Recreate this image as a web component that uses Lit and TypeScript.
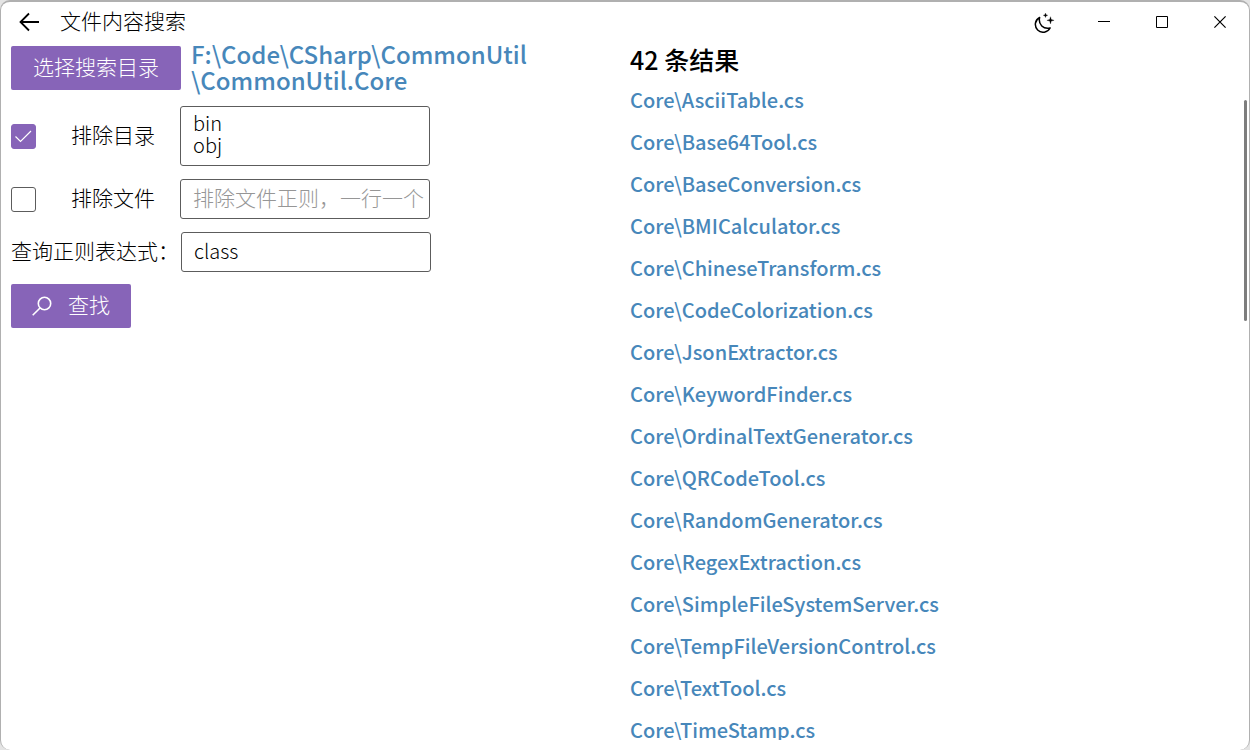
import { LitElement, html, css } from "lit";
import { customElement, state } from "lit/decorators.js";

const FILES = [
  "AsciiTable", "Base64Tool", "BaseConversion", "BMICalculator", "ChineseTransform",
  "CodeColorization", "JsonExtractor", "KeywordFinder", "OrdinalTextGenerator",
  "QRCodeTool", "RandomGenerator", "RegexExtraction", "SimpleFileSystemServer",
  "TempFileVersionControl", "TextTool", "TimeStamp",
];

@customElement("app-root")
export class AppRoot extends LitElement {
  @state() private excludeDirs = true;
  @state() private excludeFiles = false;

  static styles = css`
    :host {
      display: block;
      height: 100vh;
      background: #e4e4e4;
      color: #000;
      font: 300 21px/24px "Noto Sans CJK SC", sans-serif;
    }
    * { box-sizing: border-box; }
    button, input, textarea { font: inherit; color: inherit; margin: 0; }
    button { border: 0; padding: 0; background: none; cursor: pointer; }
    svg { display: block; fill: none; stroke: currentColor; }
    .window {
      height: 100%;
      display: flex;
      flex-direction: column;
      border: 1px solid #b0b0b0;
      border-top-width: 2px;
      border-bottom: 0;
      border-radius: 10px;
      background: #fff;
      overflow: hidden;
    }
    .titlebar { flex: none; height: 40px; display: flex; align-items: center; }
    .back { width: 56px; height: 40px; display: grid; place-items: center; }
    h1 { flex: 1; margin: 0 0 0 3px; padding-bottom: 4px; font: inherit; }
    .caption { width: 58px; height: 40px; display: grid; place-items: center; }
    .theme { margin-right: 2px; }
    .content {
      flex: 1;
      min-height: 0;
      display: grid;
      grid-template-columns: 1fr 1fr;
      padding: 0 0 10px 10px;
    }
    .form { display: flex; flex-direction: column; align-items: flex-start; }
    .primary {
      height: 44px;
      display: flex;
      align-items: center;
      justify-content: center;
      gap: 16px;
      border-radius: 2px;
      background: #8764b8;
      color: #fff;
      flex: none;
    }
    .choose { width: 170px; }
    .find { width: 120px; margin-top: 12px; }
    .row { display: flex; align-items: center; }
    .text { padding-bottom: 4px; }
    .path {
      margin-left: 10px;
      padding-bottom: 2px;
      font-size: 24px;
      line-height: 26px;
      font-weight: 500;
      color: #4787ba;
    }
    .target { height: 52px; }
    .dirs { margin-top: 12px; }
    .files { margin-top: 13px; }
    .query { margin-top: 13px; }
    .check { display: flex; align-items: center; width: 169px; gap: 35px; }
    .check input {
      appearance: none;
      width: 25px;
      height: 25px;
      border: 1px solid #5c5c5c;
      border-radius: 3px;
      background: #fff;
    }
    .check input:checked {
      border-color: #8764b8;
      background: #8764b8;
    }
    .box { position: relative; display: flex; }
    .tick { position: absolute; inset: 0; color: #fff; pointer-events: none; }
    .field {
      display: block;
      width: 250px;
      border: 1px solid #5c5c5c;
      border-radius: 3px;
      background: #fff;
      font-size: 20px;
      outline: none;
      resize: none;
      overflow: hidden;
    }
    textarea.field { height: 60px; padding: 5px 12px; line-height: 22px; }
    input.field { height: 40px; padding: 0 0 4px 12px; }
    .field::placeholder { color: #969696; opacity: 1; font-size: 21px; }
    .label { width: 170px; white-space: nowrap; }
    .results {
      position: relative;
      min-height: 0;
      display: flex;
      flex-direction: column;
    }
    h2 { margin: 2px 0 5px; font-size: 25px; line-height: 30px; font-weight: 500; }
    ul {
      flex: 1;
      min-height: 0;
      margin: 0;
      padding: 0;
      list-style: none;
      overflow-y: auto;
      scrollbar-width: none;
    }
    li { height: 42px; display: flex; align-items: center; }
    a { color: #4787ba; font-size: 20px; font-weight: 500; text-decoration: none; }
    .thumb {
      position: absolute;
      top: 58px;
      right: 2px;
      width: 3px;
      height: 221px;
      border-radius: 2px;
      background: #7d7d7d;
    }
  `;

  render() {
    return html`
      <main class="window">
        <header class="titlebar">
          <button class="back" aria-label="返回">
            <svg width="22" height="20" viewBox="0 0 22 20" stroke-width="1.8"><path d="M21 10H2M11 1.500 2.500 10l8.500 8.500" /></svg>
          </button>
          <h1>文件内容搜索</h1>
          <button class="caption theme" aria-label="主题">
            <svg width="22" height="22" viewBox="0 0 22 22" stroke-width="1.5" stroke-linejoin="round">
              <path d="M6.600 6.500A7.800 7.800 0 1 0 17.100 17C10.500 18.500 5 13.500 6.600 6.500Z" />
              <path d="M12.500 2.100l.6 1.600 1.600.6-1.600.6-.6 1.600-.6-1.600-1.600-.6 1.600-.6ZM17.500 5.700l.8 2.800 2.800.8-2.800.8-.8 2.800-.8-2.800-2.800-.8 2.800-.8Z" fill="currentColor" stroke-width=".3" />
            </svg>
          </button>
          <button class="caption" aria-label="最小化">
            <svg width="12" height="12" viewBox="0 0 12 12"><path d="M0 5.500h12" /></svg>
          </button>
          <button class="caption" aria-label="最大化">
            <svg width="12" height="12" viewBox="0 0 12 12"><path d="M.5.5h11v11H.5Z" /></svg>
          </button>
          <button class="caption" aria-label="关闭">
            <svg width="12" height="12" viewBox="0 0 12 12" stroke-width="1.2"><path d="M.4.4l11.200 11.200M11.600.4.4 11.600" /></svg>
          </button>
        </header>
        <div class="content">
          <form class="form" @submit=${(e: Event) => e.preventDefault()}>
            <div class="row target">
              <button type="button" class="primary choose"><span class="text">选择搜索目录</span></button>
              <div class="path">F:\\Code\\CSharp\\CommonUtil<br />\\CommonUtil.Core</div>
            </div>
            <div class="row dirs">
              <label class="check">
                <span class="box">
                  <input type="checkbox" .checked=${this.excludeDirs}
                    @change=${(e: Event) => (this.excludeDirs = (e.target as HTMLInputElement).checked)} />
                  ${this.excludeDirs
                    ? html`<svg class="tick" width="25" height="25" viewBox="0 0 25 25" stroke-width="1.2"><path d="M4.500 12.500l5 5L20 7" /></svg>`
                    : ""}
                </span>
                <span class="text">排除目录</span>
              </label>
              <textarea class="field" aria-label="排除目录" .value=${"bin\nobj"}></textarea>
            </div>
            <div class="row files">
              <label class="check">
                <span class="box">
                  <input type="checkbox" .checked=${this.excludeFiles}
                    @change=${(e: Event) => (this.excludeFiles = (e.target as HTMLInputElement).checked)} />
                  ${this.excludeFiles
                    ? html`<svg class="tick" width="25" height="25" viewBox="0 0 25 25" stroke-width="1.2"><path d="M4.500 12.500l5 5L20 7" /></svg>`
                    : ""}
                </span>
                <span class="text">排除文件</span>
              </label>
              <input class="field" aria-label="排除文件" placeholder="排除文件正则，一行一个" />
            </div>
            <div class="row query">
              <label class="label text" for="regex">查询正则表达式：</label>
              <input class="field" id="regex" .value=${"class"} />
            </div>
            <button class="primary find">
              <svg width="20" height="20" viewBox="0 0 20 20" stroke-width="1.6"><circle cx="12.5" cy="7.5" r="6.200" /><path d="M8 12 .7 19.300" /></svg>
              <span class="text">查找</span>
            </button>
          </form>
          <section class="results">
            <h2>42 条结果</h2>
            <ul>
              ${FILES.map((name) => html`<li><a href="#${name}">Core\\${name}.cs</a></li>`)}
            </ul>
            <div class="thumb"></div>
          </section>
        </div>
      </main>
    `;
  }
}
